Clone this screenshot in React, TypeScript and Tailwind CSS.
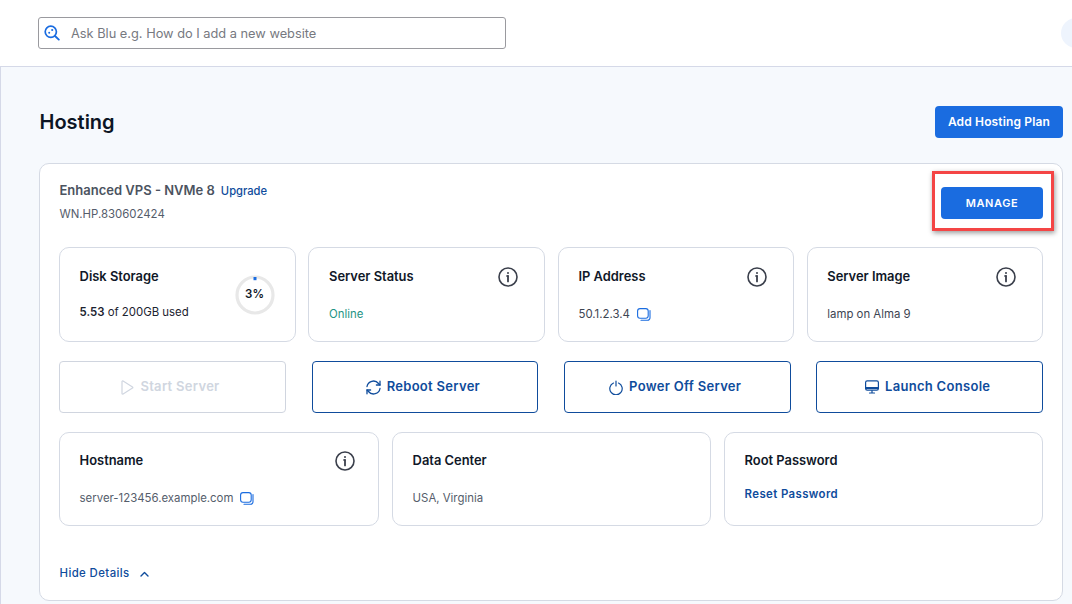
import React from 'react';

const font = { fontFamily: 'Inter, "Liberation Sans", sans-serif' };

function InfoIcon() {
  return (
    <svg width="20" height="20" viewBox="0 0 20 20" fill="none" stroke="#3a3f4b" strokeWidth="1.6" strokeLinecap="round">
      <circle cx="10" cy="10" r="9" />
      <path d="M10 9v5.4" strokeWidth="1.8" />
      <path d="M8.800 9H10" strokeWidth="1.4" />
      <circle cx="10" cy="5.900" r="1" fill="#3a3f4b" stroke="none" />
    </svg>
  );
}

function CopyIcon() {
  return (
    <svg width="14" height="13" viewBox="0 0 14 13" fill="none" stroke="#1a6ce0" strokeWidth="1.1" strokeLinecap="round">
      <rect x="0.600" y="0.600" width="10.600" height="9.600" rx="2.400" />
      <path d="M13 2.600v7.200a2.400 2.400 0 0 1-2.400 2.400H4" />
    </svg>
  );
}

function InfoCard({
  title,
  info,
  lower,
  children,
}: {
  title: string;
  info?: boolean;
  lower?: boolean;
  children: React.ReactNode;
}) {
  return (
    <div className={`rounded-[10px] border border-[#d5dae4] flex flex-col pl-[19.600px] ${lower ? 'h-[94px] pt-[18px] pr-[23px]' : 'h-[95px] pt-[19px] pr-[26px]'}`}>
      <div className="flex justify-between items-start h-5">
        <span className="text-[12.900px] leading-[20px] font-semibold text-[#101828]">{title}</span>
        {info && <InfoIcon />}
      </div>
      <div className="mt-[19px] text-[11.400px] leading-[16px] flex items-center gap-[7px]">{children}</div>
    </div>
  );
}

function ActionButton({ label, icon, disabled }: { label: string; icon: React.ReactNode; disabled?: boolean }) {
  return (
    <div
      className={`h-[52px] rounded-[4px] border pr-[4px] flex items-center justify-center gap-[6px] text-[13px] font-semibold tracking-[0.300px] ${
        disabled ? 'border-[#d0d5df] text-[#d0d6e0]' : 'border-[#0f4c9c] text-[#0f4c9c]'
      }`}
    >
      {icon}
      {label}
    </div>
  );
}

export default function App() {
  return (
    <div className="w-[1072px] h-[604px] overflow-hidden bg-white relative" style={font}>
      <header className="h-[67px] bg-white border-b border-[#d5d9e8] pl-[38px] pt-[17px] flex justify-between">
        <div className="w-[468px] h-[32px] rounded-[3px] border border-[#9a9a9f] flex items-center pl-[5px]">
          <svg width="16" height="16" viewBox="0 0 16 16" fill="none" stroke="#1a6ce0" strokeWidth="1.7" strokeLinecap="round">
            <circle cx="6.800" cy="6.800" r="5.600" />
            <path d="M11 11l3.800 3.600" strokeWidth="1.900" />
            <circle cx="5.200" cy="7.800" r="1" fill="#1a6ce0" stroke="none" />
            <circle cx="8.200" cy="5" r="1.100" fill="#1a6ce0" stroke="none" />
          </svg>
          <span className="ml-[11px] mt-[2px] text-[12.800px] text-[#77797f]">Ask Blu e.g. How do I add a new website</span>
        </div>
        <div className="w-[30px] h-[30px] rounded-full bg-[#eef4fd] -mr-[19px] mt-[1px]" />
      </header>

      <main className="h-[537px] bg-[#f6f9fd] border-l border-[#d5d9e8] pl-[38px] pr-[9px] pt-[39px]">
        <div className="flex justify-between items-center h-[32px]">
          <h1 className="ml-[0.500px] text-[20px] font-semibold text-[#0c1524]">Hosting</h1>
          <div className="w-[128px] h-[32px] rounded-[4px] bg-[#1a6ce0] flex items-center justify-center text-[12px] font-semibold tracking-[0.150px] text-white">
            Add Hosting Plan
          </div>
        </div>

        <section className="mt-[25px] h-[438px] rounded-[10px] border border-[#d5dae4] bg-white px-[19px] pt-[19px]">
          <div className="flex justify-between h-[64px]">
            <div className="pl-[0.500px]">
              <div className="flex items-center gap-[6px] h-[16px]">
                <span className="text-[13px] font-semibold text-[#4b5360]">Enhanced VPS - NVMe 8</span>
                <span className="text-[11.200px] font-medium text-[#0f4c9c]">Upgrade</span>
              </div>
              <div className="mt-[7px] text-[11.400px] leading-[16px] text-[#555d6b]">WN.HP.830602424</div>
            </div>
            <div className="w-[102px] h-[32px] mt-[4px] rounded-[4px] bg-[#1a6ce0] flex items-center justify-center text-[11px] font-semibold tracking-[0.600px] text-white">
              MANAGE
            </div>
          </div>

          <div className="grid grid-cols-[237px_237px_236.400px_236.250px] gap-x-[12.450px]">
            <div className="relative">
              <InfoCard title="Disk Storage">
                <span className="-mt-[2px] text-[#1b2330]">
                  <span className="font-semibold">5.53</span> of 200GB used
                </span>
              </InfoCard>
              <div className="absolute left-[175.500px] top-[28px] w-[40px] h-[40px]">
                <svg width="40" height="40" viewBox="0 0 40 40" fill="none">
                  <circle cx="20" cy="20" r="18" stroke="#e8e8e8" strokeWidth="3.200" />
                  <path d="M20 2v3.200" stroke="#1a6ce0" strokeWidth="3" />
                </svg>
                <span className="absolute inset-0 flex items-center justify-center text-[11.500px] font-semibold text-[#101828]">3%</span>
              </div>
            </div>
            <InfoCard title="Server Status" info>
              <span className="text-[#1f9484]">Online</span>
            </InfoCard>
            <InfoCard title="IP Address" info>
              <span className="text-[#3d4552]">50.1.2.3.4</span>
              <CopyIcon />
            </InfoCard>
            <InfoCard title="Server Image" info>
              <span className="text-[#3d4552]">lamp on Alma 9</span>
            </InfoCard>
          </div>

          <div className="mt-[19px] grid grid-cols-[227px_226.400px_227px_226.600px] gap-x-[25.670px]">
            <ActionButton
              disabled
              label="Start Server"
              icon={
                <svg width="13" height="15" viewBox="0 0 13 15" fill="none" stroke="#d0d6e0" strokeWidth="1.2" strokeLinejoin="round">
                  <path d="M1 1.600v11.800c0 .6.6.9 1.100.6l9.400-5.900c.5-.3.5-.9 0-1.200L2.100 1c-.5-.3-1.100 0-1.100.6z" />
                </svg>
              }
            />
            <ActionButton
              label="Reboot Server"
              icon={
                <svg width="15" height="15" viewBox="0 0 15 15" fill="none" stroke="#0f4c9c" strokeWidth="1.3" strokeLinecap="round" strokeLinejoin="round">
                  <path d="M1 6.500A6.500 6.500 0 0 1 12.500 3.500L14 5" />
                  <path d="M14 1.200V5h-3.600" />
                  <path d="M14 8.500A6.500 6.500 0 0 1 2.500 11.500L1 10" />
                  <path d="M1 13.800V10h3.600" />
                </svg>
              }
            />
            <ActionButton
              label="Power Off Server"
              icon={
                <svg width="14" height="15" viewBox="0 0 14 15" fill="none" stroke="#0f4c9c" strokeWidth="1.2" strokeLinecap="round">
                  <path d="M4.500 3A6.200 6.200 0 1 0 9.500 3" />
                  <path d="M7 1v5" />
                </svg>
              }
            />
            <ActionButton
              label="Launch Console"
              icon={
                <svg width="14" height="14" viewBox="0 0 14 14" fill="none" stroke="#0f4c9c" strokeWidth="1.200" strokeLinecap="round">
                  <rect x="0.600" y="0.800" width="12.800" height="9.400" rx="1.600" />
                  <path d="M0.800 8h12.400" strokeWidth="2" />
                  <path d="M7 10.500v2M4.500 13h5" />
                </svg>
              }
            />
          </div>

          <div className="mt-[19px] grid grid-cols-[320px_319px_319px] gap-x-[13px]">
            <InfoCard lower title="Hostname" info>
              <span className="text-[#555d6b]">server-123456.example.com</span>
              <CopyIcon />
            </InfoCard>
            <InfoCard lower title="Data Center">
              <span className="text-[#555d6b]">USA, Virginia</span>
            </InfoCard>
            <InfoCard lower title="Root Password">
              <span className="font-semibold text-[#0f4c9c] -mt-[4px] tracking-[0.400px]">Reset Password</span>
            </InfoCard>
          </div>

          <div className="mt-[39px] pl-[0.500px] flex items-center gap-[10px] text-[11.400px] font-medium tracking-[0.400px] text-[#0f4c9c]">
            Hide Details
            <svg width="9" height="6" viewBox="0 0 9 6" fill="none" stroke="#0f4c9c" strokeWidth="1.400" strokeLinecap="round" strokeLinejoin="round">
              <path d="M1 5l3.500-3.500L8 5" />
            </svg>
          </div>
        </section>
      </main>

      {/* callout drawn over the screenshot */}
      <div className="absolute left-[932px] top-[171px] w-[122px] h-[60px] border-[3px] border-[#f44545] shadow-[1px_2px_5px_rgba(0,0,0,0.4)]" />
    </div>
  );
}
